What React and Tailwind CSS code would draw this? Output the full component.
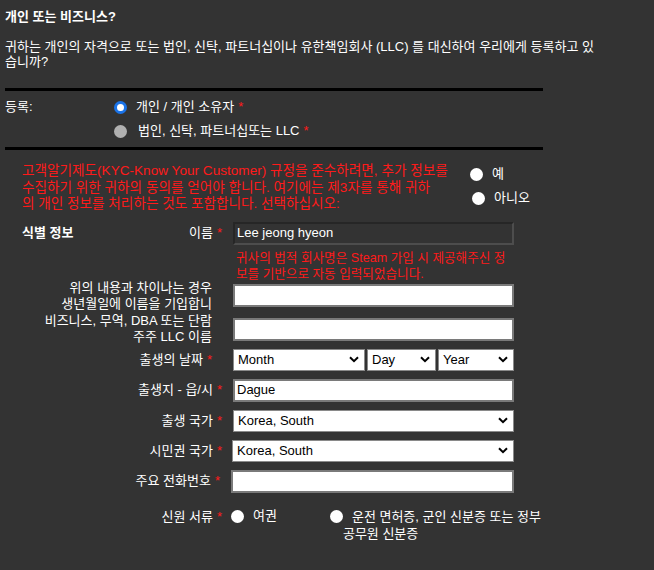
const font = "font-['Liberation_Sans','Noto_Sans_CJK_KR',sans-serif]";

const Req = () => <span className="ml-[4px] text-[#ff1a1a]">*</span>;

function Radio({ kind = "white" }) {
  if (kind === "checked") {
    return (
      <span className="inline-block h-[13px] w-[13px] shrink-0 rounded-full border-[3px] border-[#1a73e8] bg-white" />
    );
  }
  if (kind === "grey") {
    return <span className="inline-block h-[13px] w-[13px] shrink-0 rounded-full bg-[#b0b0b0]" />;
  }
  return <span className="inline-block h-[13px] w-[13px] shrink-0 rounded-full bg-white" />;
}

function Chevron() {
  return (
    <svg width="10" height="7" viewBox="0 0 10 7" className="shrink-0">
      <path d="M1 1.2 5 5.2 9 1.2" fill="none" stroke="#000" strokeWidth="2" />
    </svg>
  );
}

function Select({ value, className = "" }) {
  return (
    <div
      className={`flex h-[22px] items-center justify-between border border-[#8a8a8a] bg-white pl-[4px] pr-[5px] text-black ${className}`}
    >
      <span>{value}</span>
      <Chevron />
    </div>
  );
}

function TextBox({ value = "", className = "" }) {
  return (
    <div
      className={`flex h-[23px] items-center border-2 border-[#7a7a7a] bg-white pl-[2px] text-black ${className}`}
    >
      {value}
    </div>
  );
}

function Row({ label, children, className = "" }) {
  return (
    <div className={`flex items-center ${className}`}>
      <div className="w-[200px] text-right">{label}</div>
      <div className="ml-[11px] w-[281px]">{children}</div>
    </div>
  );
}

export default function App() {
  return (
    <div className={`min-h-[570px] w-[654px] bg-[#333333] text-[13px] text-white ${font}`}>
      <div className="px-[5px] pt-[9px]">
        <h2 className="text-[13px] font-bold leading-[16px]">개인 또는 비즈니스?</h2>
        <p className="mt-[14px] w-[640px] leading-[15px]">
          귀하는 개인의 자격으로 또는 법인, 신탁, 파트너십이나 유한책임회사 (LLC) 를 대신하여 우리에게 등록하고 있
          <br />
          습니까?
        </p>

        <div className="mt-[19px] h-[3px] w-[538px] bg-black" />

        {/* 등록 */}
        <div className="mt-[4px]">
          <div className="flex h-[24px] items-center">
            <span className="w-[109px]">등록:</span>
            <Radio kind="checked" />
            <span className="ml-[9px]">
              개인 / 개인 소유자
              <Req />
            </span>
          </div>
          <div className="flex h-[24px] items-center">
            <span className="w-[109px]" />
            <Radio kind="grey" />
            <span className="ml-[11px]">
              법인, 신탁, 파트너십또는 LLC
              <Req />
            </span>
          </div>
        </div>

        <div className="mt-[4px] h-[3px] w-[538px] bg-black" />
      </div>

      {/* KYC */}
      <div className="mt-[13px] flex pl-[22px]">
        <p className="w-[440px] whitespace-nowrap text-[13.6px] leading-[16.5px] text-[#ff1a1a]">
          고객알기제도(KYC-Know Your Customer) 규정을 준수하려면, 추가 정보를
          <br />
          수집하기 위한 귀하의 동의를 얻어야 합니다. 여기에는 제3자를 통해 귀하
          <br />
          의 개인 정보를 처리하는 것도 포함합니다. 선택하십시오:
        </p>
        <div className="ml-[8px] pt-[1px]">
          <div className="flex h-[20px] items-center">
            <Radio />
            <span className="ml-[9px]">예</span>
          </div>
          <div className="mt-[4px] flex h-[20px] items-center pl-[2px]">
            <Radio />
            <span className="ml-[9px]">아니오</span>
          </div>
        </div>
      </div>

      {/* 식별 정보 */}
      <div className="mt-[9px] pl-[22px]">
        <div className="flex items-center">
          <div className="flex w-[200px] items-center justify-between">
            <span className="font-bold">식별 정보</span>
            <span>
              이름
              <Req />
            </span>
          </div>
          <div className="ml-[11px] flex h-[23px] w-[281px] items-center border-2 border-t-[#262626] border-l-[#262626] border-r-[#4d4d4d] border-b-[#4d4d4d] bg-[#333333] pl-[2px] text-white">
            Lee jeong hyeon
          </div>
        </div>

        <p className="ml-[214px] mt-[5px] whitespace-nowrap text-[12.6px] leading-[16px] text-[#ff1a1a]">
          귀사의 법적 회사명은 Steam 가입 시 제공해주신 정
          <br />
          보를 기반으로 자동 입력되었습니다.
        </p>

        <Row
          className="mt-[-2px]"
          label={
            <div className="pr-[10px] leading-[16px]">
              위의 내용과 차이나는 경우
              <br />
              생년월일에 이름을 기입합니
            </div>
          }
        >
          <TextBox />
        </Row>

        <Row
          className="mt-[1px]"
          label={
            <div className="pr-[10px] leading-[16.5px]">
              비즈니스, 무역, DBA 또는 단람
              <br />
              주주 LLC 이름
            </div>
          }
        >
          <TextBox />
        </Row>

        <Row
          className="mt-[3px]"
          label={
            <span className="pr-[10px]">
              출생의 날짜
              <Req />
            </span>
          }
        >
          <div className="flex gap-[2px]">
            <Select value="Month" className="w-[132px]" />
            <Select value="Day" className="w-[69px]" />
            <Select value="Year" className="w-[76px]" />
          </div>
        </Row>

        <Row
          className="mt-[8px]"
          label={
            <span>
              출생지 - 읍/시
              <Req />
            </span>
          }
        >
          <TextBox value="Dague" />
        </Row>

        <Row
          className="mt-[8px]"
          label={
            <span>
              출생 국가
              <Req />
            </span>
          }
        >
          <Select value="Korea, South" />
        </Row>

        <Row
          className="mt-[8px]"
          label={
            <span>
              시민권 국가
              <Req />
            </span>
          }
        >
          <Select value="Korea, South" className="ml-[-1px]" />
        </Row>

        <Row
          className="mt-[8px]"
          label={
            <span className="pr-[2px]">
              주요 전화번호
              <Req />
            </span>
          }
        >
          <TextBox className="ml-[-2px]" />
        </Row>

        <div className="mt-[15px] flex items-start">
          <div className="w-[200px] text-right leading-[17px]">
            신원 서류
            <Req />
          </div>
          <div className="ml-[9px] flex items-start">
            <div className="flex h-[17px] items-center">
              <Radio />
              <span className="ml-[9px]">여권</span>
            </div>
            <div className="ml-[53px] leading-[17px]">
              <div className="flex h-[17px] items-center">
                <Radio />
                <span className="ml-[9px] whitespace-nowrap">운전 면허증, 군인 신분증 또는 정부</span>
              </div>
              <div className="pl-[13px]">공무원 신분증</div>
            </div>
          </div>
        </div>
      </div>
    </div>
  );
}
